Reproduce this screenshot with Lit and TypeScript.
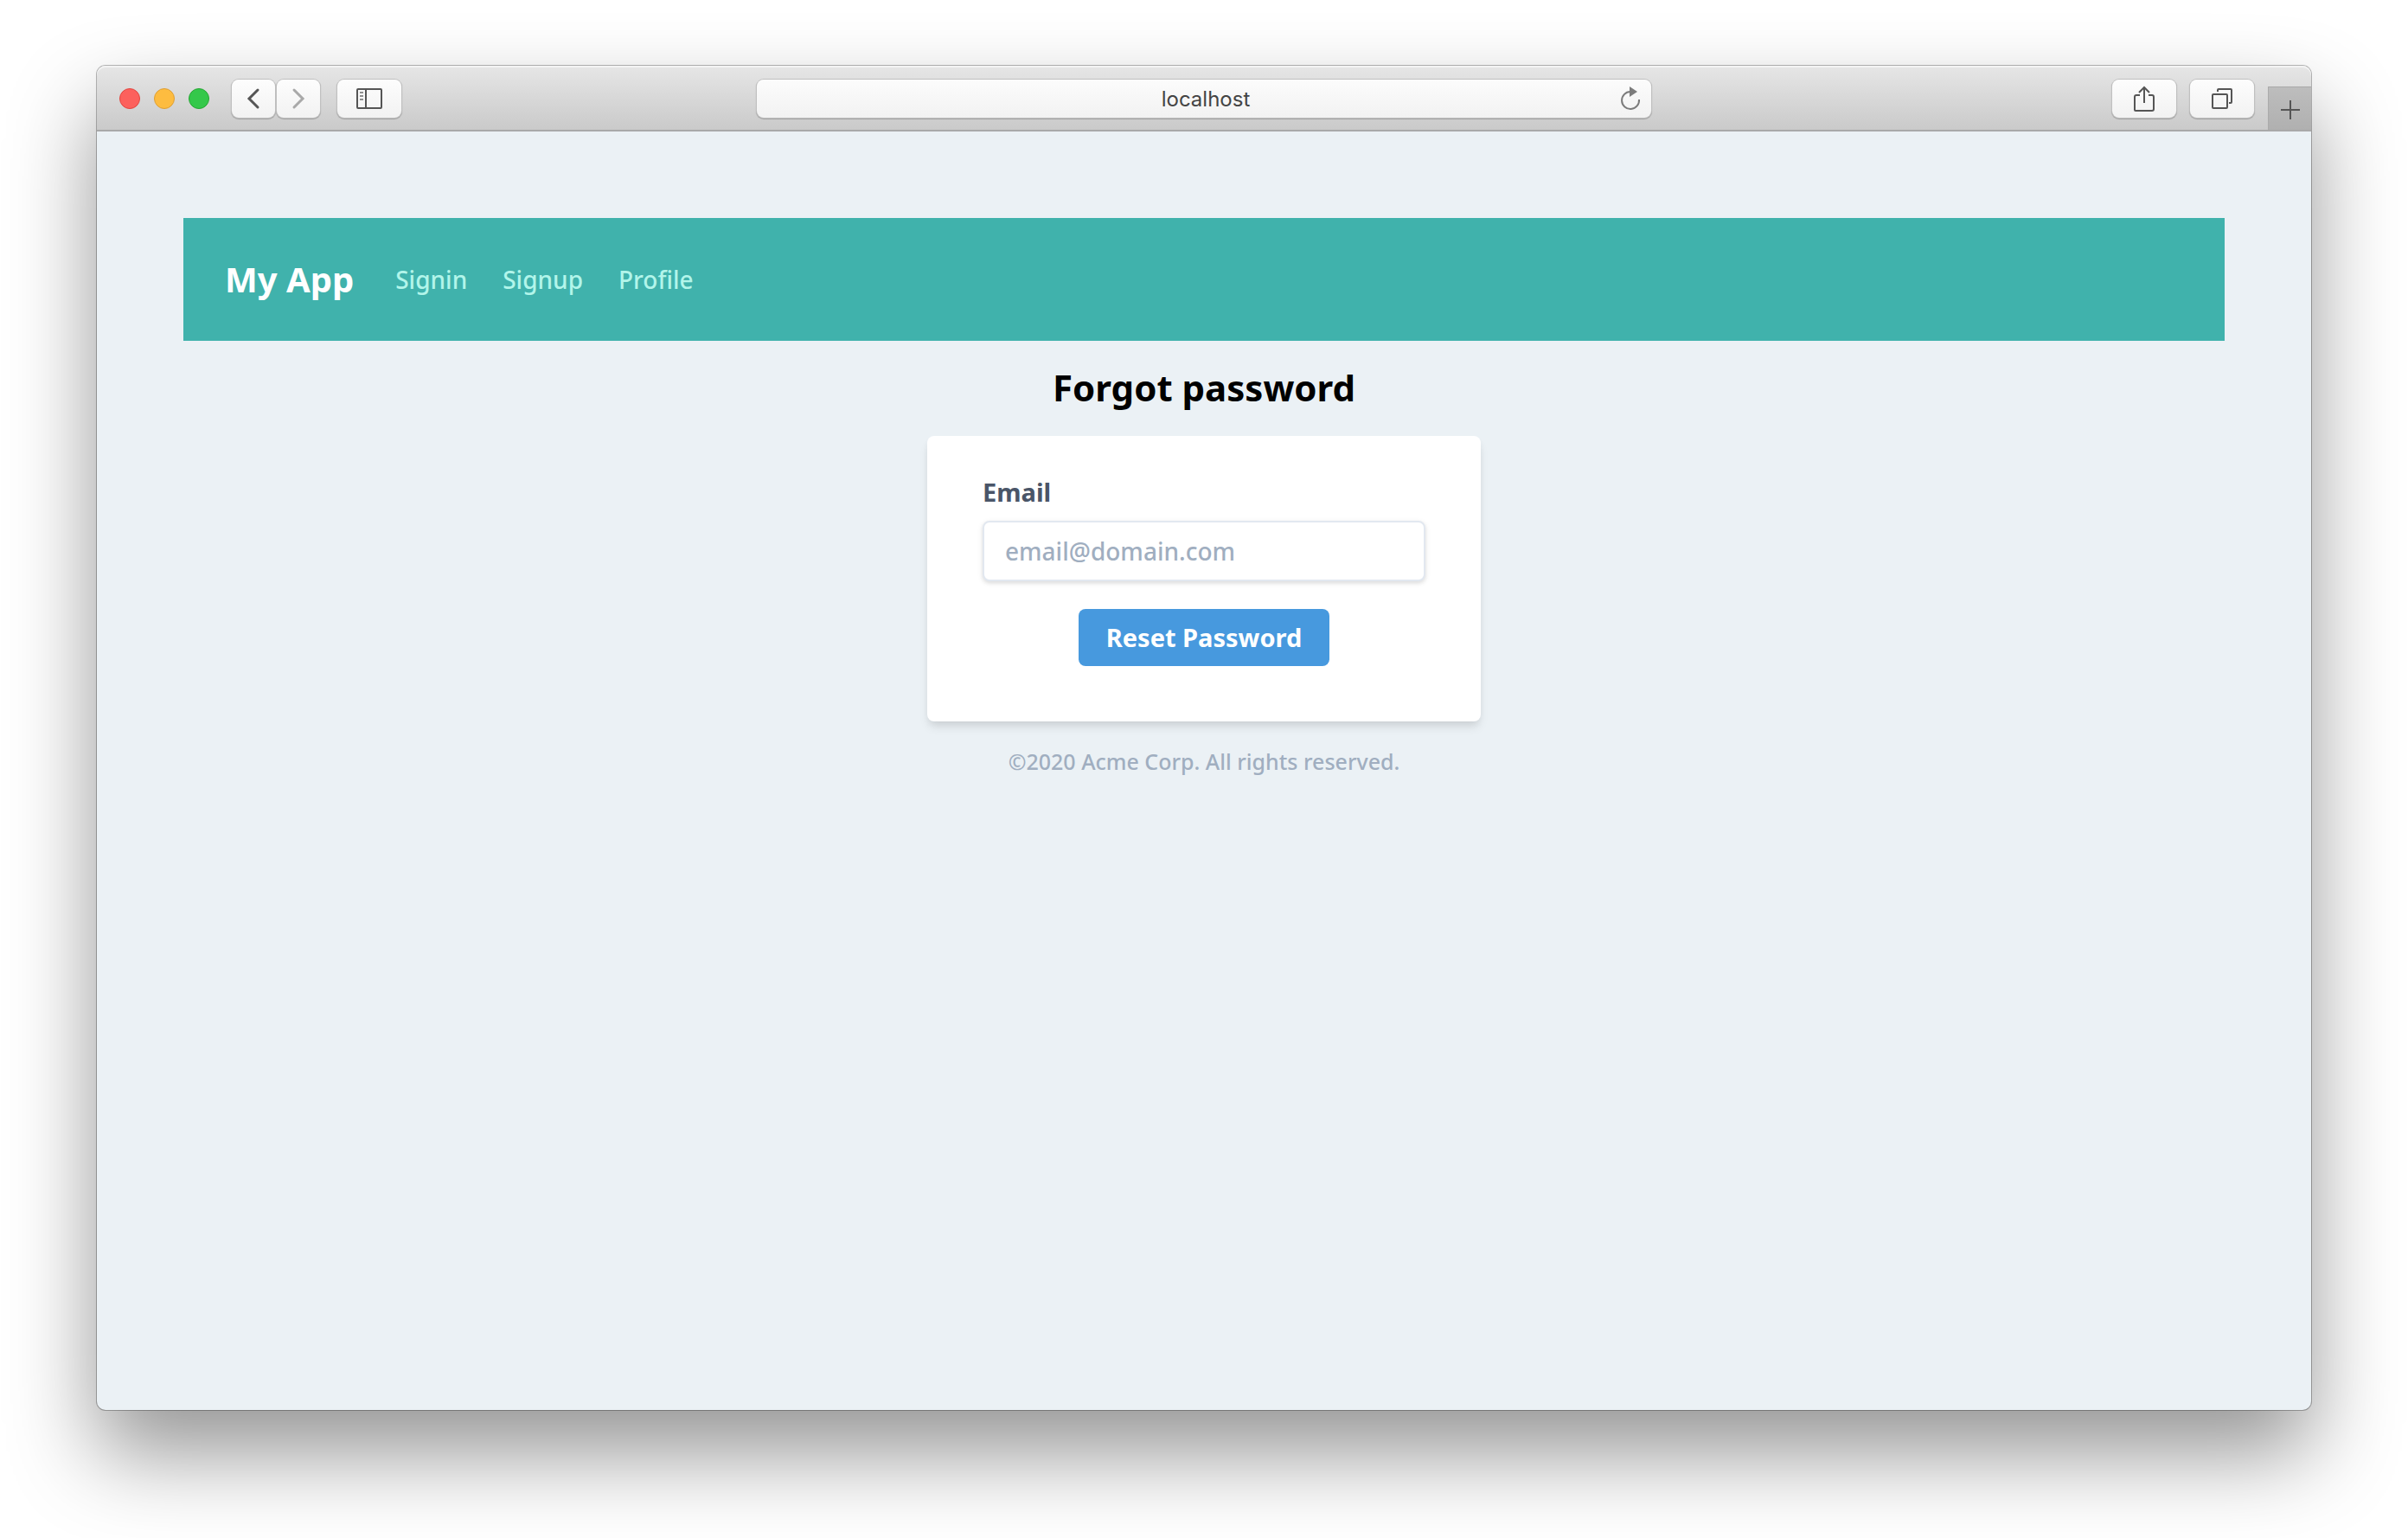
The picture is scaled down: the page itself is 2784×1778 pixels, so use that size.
import { LitElement, html, css, svg } from "lit";
import { customElement } from "lit/decorators.js";

const backIcon = svg`<svg class="icon" width="16" height="26" viewBox="0 0 16 26"><path d="M13 3 3 13l10 10" stroke-width="3" stroke-linecap="round"/></svg>`;
const forwardIcon = svg`<svg class="icon" width="16" height="26" viewBox="0 0 16 26"><path d="M3 3l10 10L3 23" stroke-width="3" stroke-linecap="round"/></svg>`;
const sidebarIcon = svg`<svg class="icon" width="30" height="24" viewBox="0 0 30 24"><rect x="1" y="1" width="28" height="22" rx="1" stroke-width="2"/><path d="M11 1v22" stroke-width="2"/><path d="M4 5h4M4 9h4M4 13h4" stroke="#909090" stroke-width="2"/></svg>`;
const shareIcon = svg`<svg class="icon" width="24" height="32" viewBox="0 0 24 32"><path d="M7 12H3q-2 0-2 2v15q0 1 1 1h19q2 0 2-2V14q0-2-2-2h-4" stroke-width="2"/><path d="M12 21V3M6 9l6-6 6 6" stroke-width="2"/></svg>`;
const tabsIcon = svg`<svg class="icon" width="24" height="24" viewBox="0 0 24 24"><rect x="1" y="7" width="17" height="16" rx="1" stroke-width="2"/><path d="M7 4V2q0-1 1-1h14q1 0 1 1v14q0 1-1 1h-2" stroke-width="2"/></svg>`;
const plusIcon = svg`<svg class="icon" width="22" height="22" viewBox="0 0 22 22"><path d="M11 0v22M0 11h22" stroke-width="2"/></svg>`;
const reloadIcon = svg`<svg class="icon" width="24" height="28" viewBox="0 0 24 28"><path d="M12 6A10 10 0 1 0 22 15" stroke-width="2"/><path d="M11 0l9 6-9 6z" fill="currentColor" stroke="none"/></svg>`;

@customElement("browser-toolbar")
export class BrowserToolbar extends LitElement {
  static styles = css`
    :host {
      display: block;
    }
    .bar {
      display: grid;
      grid-template-columns: 1fr minmax(0, 1034px) 1fr;
      height: 76px;
      box-sizing: border-box;
      padding-top: 2px;
      border-bottom: 2px solid #a9a9a9;
      border-radius: 10px 10px 0 0;
      background: linear-gradient(#e6e6e6, #cacaca);
      box-shadow: inset 0 2px 0 #f3f3f3;
    }
    .side {
      display: flex;
      align-items: center;
    }
    .left {
      padding-left: 26px;
    }
    .right {
      justify-content: flex-end;
      gap: 16px;
    }
    .lights {
      display: flex;
      gap: 16px;
      margin-right: 26px;
    }
    .light {
      width: 24px;
      height: 24px;
      box-sizing: border-box;
      border-radius: 50%;
      border: 1px solid #e2463f;
      background: #fc615d;
    }
    .minimise {
      border-color: #de9f34;
      background: #fdbc40;
    }
    .zoom {
      border-color: #25a732;
      background: #34c84a;
    }
    button {
      display: flex;
      align-items: center;
      justify-content: center;
      padding: 0;
      border: 0;
      color: #555;
      font: inherit;
    }
    .tool {
      width: 74px;
      height: 44px;
      border-radius: 8px;
      background: linear-gradient(#fdfdfd, #f2f2f2);
      box-shadow: 0 0 0 1px #c0c0c0, 0 1px 1px 1px #a0a0a0;
    }
    .step {
      width: 50px;
    }
    .history {
      display: flex;
      gap: 2px;
      margin-right: 20px;
    }
    .step:disabled {
      color: #a9a9a9;
    }
    .address {
      display: grid;
      grid-template-columns: 48px 1fr 48px;
      align-items: center;
      align-self: center;
      height: 44px;
      border-radius: 8px;
      background: linear-gradient(#fcfcfc, #f2f2f2);
      box-shadow: 0 0 0 1px #c0c0c0, 0 1px 1px 1px #a0a0a0;
    }
    .url {
      grid-column: 2;
      min-width: 0;
      padding: 2px 0 0 4px;
      border: 0;
      outline: 0;
      background: none;
      color: #444;
      font: 24px/32px Inter, "Liberation Sans", sans-serif;
      text-align: center;
    }
    .reload {
      height: 44px;
      background: none;
      color: #7c7c7c;
    }
    .newtab {
      align-self: flex-end;
      box-sizing: border-box;
      width: 50px;
      height: 50px;
      padding-top: 2px;
      border-top: 1px solid #a8a8a8;
      border-left: 1px solid #ababab;
      background: linear-gradient(#bdbdbd, #b0b0b0);
    }
    .icon {
      display: block;
      fill: none;
      stroke: currentColor;
    }
  `;

  render() {
    return html`
      <div class="bar">
        <div class="side left">
          <div class="lights">
            <span class="light"></span>
            <span class="light minimise"></span>
            <span class="light zoom"></span>
          </div>
          <div class="history">
            <button class="tool step" aria-label="Back">${backIcon}</button>
            <button class="tool step" aria-label="Forward" disabled>${forwardIcon}</button>
          </div>
          <button class="tool" aria-label="Sidebar">${sidebarIcon}</button>
        </div>
        <div class="address">
          <input class="url" type="text" aria-label="Address" value="localhost" />
          <button class="reload" aria-label="Reload">${reloadIcon}</button>
        </div>
        <div class="side right">
          <button class="tool" aria-label="Share">${shareIcon}</button>
          <button class="tool" aria-label="Tabs">${tabsIcon}</button>
          <button class="newtab" aria-label="New tab">${plusIcon}</button>
        </div>
      </div>
    `;
  }
}

@customElement("forgot-password-page")
export class ForgotPasswordPage extends LitElement {
  static styles = css`
    :host {
      display: block;
      padding: 100px;
      font-family: "Noto Sans", "Open Sans", sans-serif;
      font-size: 28px;
      font-weight: 500;
      line-height: 34px;
    }
    .nav {
      display: flex;
      align-items: center;
      gap: 48px;
      padding: 48px;
      background: #40b2ac;
    }
    .brand {
      color: #fff;
      font-size: 40px;
      line-height: 46px;
      font-weight: 700;
      text-decoration: none;
    }
    .links {
      display: flex;
      gap: 41px;
    }
    .link {
      color: #b2f5ea;
      text-decoration: none;
    }
    .title {
      margin: 31px 0 33px;
      color: #000;
      font-size: 42px;
      line-height: 46px;
      font-weight: 700;
      text-align: center;
    }
    .card {
      display: flex;
      flex-direction: column;
      box-sizing: border-box;
      max-width: 640px;
      margin: 0 auto;
      padding: 48px 64px 64px;
      border-radius: 8px;
      background: #fff;
      box-shadow: 0 8px 12px -2px rgba(0, 0, 0, 0.1), 0 4px 8px -2px rgba(0, 0, 0, 0.06);
    }
    .label {
      margin-bottom: 16px;
      color: #4a5568;
      font-size: 29px;
      font-weight: 700;
    }
    .email {
      box-sizing: border-box;
      width: 100%;
      height: 70px;
      margin: 0 0 32px;
      padding: 16px 24px;
      border: 2px solid #e2e8f0;
      border-radius: 8px;
      background: #fff;
      box-shadow: 0 2px 6px rgba(0, 0, 0, 0.1), 0 2px 4px rgba(0, 0, 0, 0.06);
      color: #4a5568;
      font: inherit;
    }
    .email::placeholder {
      color: #a0aec0;
      opacity: 1;
    }
    .submit {
      align-self: center;
      padding: 16px 32px;
      border: 0;
      border-radius: 8px;
      background: #4799de;
      color: #fff;
      font: inherit;
      font-size: 29px;
      font-weight: 700;
    }
    .footer {
      margin: 31px 0 0;
      color: #a0aec0;
      font-size: 25px;
      line-height: 30px;
      text-align: center;
    }
  `;

  render() {
    return html`
      <nav class="nav">
        <a class="brand" href="#">My App</a>
        <div class="links">
          ${["Signin", "Signup", "Profile"].map(
            (name) => html`<a class="link" href="#${name.toLowerCase()}">${name}</a>`
          )}
        </div>
      </nav>
      <main>
        <h1 class="title">Forgot password</h1>
        <form class="card">
          <label class="label" for="email">Email</label>
          <input class="email" id="email" type="email" placeholder="email@domain.com" />
          <button class="submit" type="button">Reset Password</button>
        </form>
      </main>
      <footer><p class="footer">©2020 Acme Corp. All rights reserved.</p></footer>
    `;
  }
}

@customElement("app-root")
export class AppRoot extends LitElement {
  static styles = css`
    :host {
      display: flex;
      box-sizing: border-box;
      min-height: 100vh;
      padding: 76px 112px 148px;
      background: #fff;
      overflow: hidden;
    }
    .window {
      flex: 1;
      min-width: 0;
      border-radius: 10px;
      background: #ebf1f5;
      box-shadow: 0 0 0 1px rgba(0, 0, 0, 0.28), 0 50px 100px rgba(0, 0, 0, 0.42);
    }
  `;

  render() {
    return html`
      <div class="window">
        <browser-toolbar></browser-toolbar>
        <forgot-password-page></forgot-password-page>
      </div>
    `;
  }
}
